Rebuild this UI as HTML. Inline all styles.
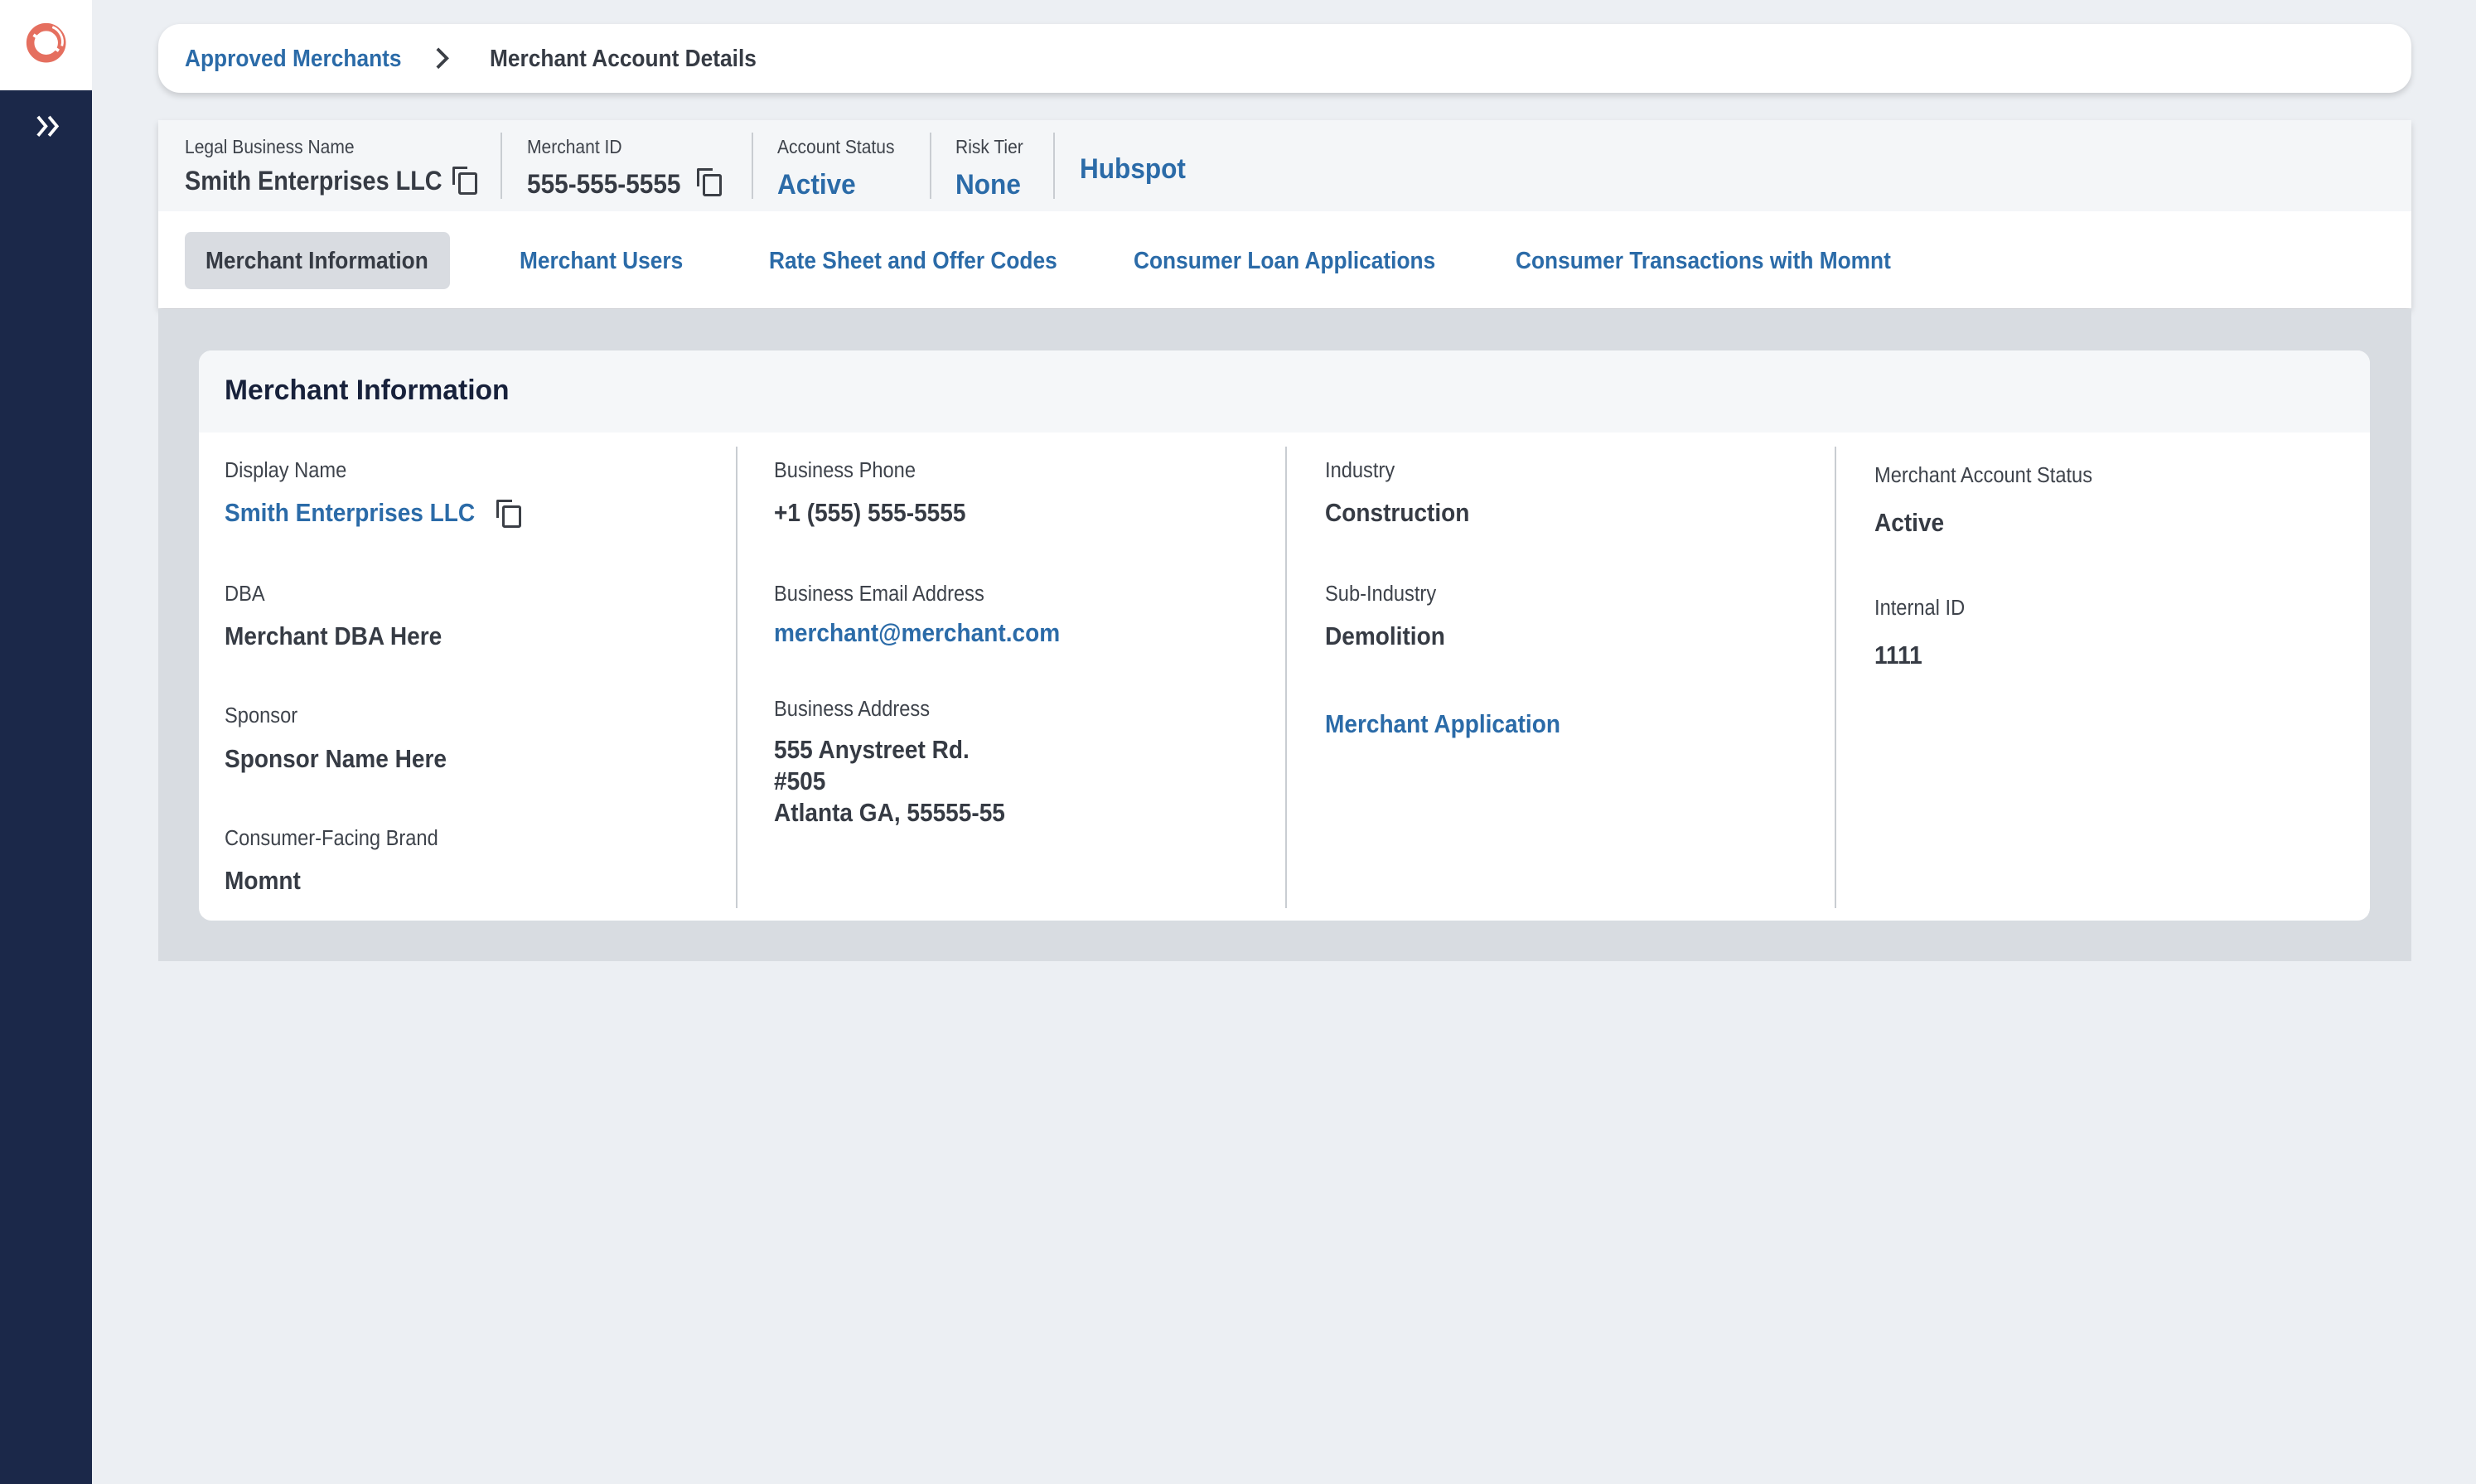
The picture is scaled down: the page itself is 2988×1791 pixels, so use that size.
<!DOCTYPE html>
<html><head><meta charset="utf-8"><style>
html,body{margin:0;padding:0;}
body{width:2988px;height:1790px;overflow:hidden;background:#eceff3;font-family:"Liberation Sans",sans-serif;}
#w{zoom:1.9056;width:1568px;height:940px;position:relative;}
.a{position:absolute;white-space:nowrap;transform:scaleX(.92);transform-origin:left center;line-height:1;}
.b{font-weight:bold;}
.blue{color:#2b6ba8;}
.dk{color:#363b44;}
.lb{font-size:13.5px;color:#3e434b;}
.lbs{font-size:12px;color:#3e434b;}
.v{font-size:16px;font-weight:bold;color:#363b44;}
.sep{position:absolute;width:1px;background:#c9cdd2;}
.copy{position:absolute;width:9px;height:11px;border:1.6px solid #3b3f46;border-radius:1.5px;}
.copy:before{content:"";position:absolute;left:-5px;top:-5px;width:8px;height:10px;border-left:1.6px solid #3b3f46;border-top:1.6px solid #3b3f46;border-radius:1px 0 0 0;}
</style></head><body><div id="w">
<div style="position:absolute;left:0;top:0;width:58px;height:940px;background:#1b2849;"></div>
<div style="position:absolute;left:0;top:0;width:58px;height:57px;background:#fff;"></div>
<svg style="position:absolute;left:15px;top:13px" width="28" height="28" viewBox="0 0 28 28"><circle cx="14" cy="14" r="10" fill="none" stroke="#e56f5f" stroke-width="5"/><path d="M6 9 L14 14 M22 19 L14 14" stroke="#fff" stroke-width="2"/><path d="M18 4 A10 10 0 0 1 24 16" stroke="#fff" stroke-width="1.5" fill="none"/></svg>
<svg style="position:absolute;left:22px;top:73px" width="16" height="14"><path d="M2 1 L7 7 L2 13 M9 1 L14 7 L9 13" stroke="#fff" stroke-width="2" fill="none"/></svg>
<div style="position:absolute;left:100px;top:15px;width:1427px;height:44px;background:#fff;border-radius:14px;box-shadow:0 2px 4px rgba(0,0,0,.15);"></div>
<div class="a b blue" style="left:117px;top:30px;font-size:15px;">Approved Merchants</div>
<svg style="position:absolute;left:275px;top:30px" width="10" height="14"><path d="M2 1 L8 7 L2 13" stroke="#3b3f46" stroke-width="2" fill="none"/></svg>
<div class="a b dk" style="left:310px;top:30px;font-size:15px;">Merchant Account Details</div>
<div style="position:absolute;left:100px;top:76px;width:1427px;height:119px;background:#fff;box-shadow:0 2px 4px rgba(0,0,0,.15);"></div>
<div style="position:absolute;left:100px;top:76px;width:1427px;height:58px;background:#f4f6f8;"></div>
<div class="a lbs" style="left:117px;top:87px;">Legal Business Name</div>
<div class="a v" style="left:117px;top:106px;font-size:17px;transform:scaleX(.89);">Smith Enterprises LLC</div>
<div class="copy" style="left:290px;top:109px;"></div>
<div class="sep" style="left:317px;top:84px;height:42px;"></div>
<div class="a lbs" style="left:334px;top:87px;">Merchant ID</div>
<div class="a v" style="left:334px;top:108px;font-size:17px;">555-555-5555</div>
<div class="copy" style="left:445px;top:110px;"></div>
<div class="sep" style="left:476px;top:84px;height:42px;"></div>
<div class="a lbs" style="left:492px;top:87px;">Account Status</div>
<div class="a v" style="left:492px;top:108px;font-size:18px;color:#2b6ba8;">Active</div>
<div class="sep" style="left:589px;top:84px;height:42px;"></div>
<div class="a lbs" style="left:605px;top:87px;">Risk Tier</div>
<div class="a v" style="left:605px;top:108px;font-size:18px;color:#2b6ba8;">None</div>
<div class="sep" style="left:667px;top:84px;height:42px;"></div>
<div class="a v" style="left:684px;top:98px;font-size:18px;color:#2b6ba8;">Hubspot</div>
<div style="position:absolute;left:117px;top:147px;width:168px;height:36px;background:#d9dce1;border-radius:4px;"></div>
<div class="a b dk" style="left:130px;top:158px;font-size:15px;">Merchant Information</div>
<div class="a b blue" style="left:329px;top:158px;font-size:15px;">Merchant Users</div>
<div class="a b blue" style="left:487px;top:158px;font-size:15px;">Rate Sheet and Offer Codes</div>
<div class="a b blue" style="left:718px;top:158px;font-size:15px;">Consumer Loan Applications</div>
<div class="a b blue" style="left:960px;top:158px;font-size:15px;">Consumer Transactions with Momnt</div>
<div style="position:absolute;left:100px;top:196px;width:1427px;height:413px;background:#d8dce1;"></div>
<div style="position:absolute;left:126px;top:222px;width:1375px;height:361px;background:#fff;border-radius:8px;overflow:hidden;">
<div style="height:52px;background:#f5f7f9;"></div></div>
<div class="a" style="left:142px;top:238px;font-size:18px;font-weight:bold;color:#17213b;transform:scaleX(.98);">Merchant Information</div>
<div class="sep" style="left:466px;top:283px;height:292px;"></div>
<div class="sep" style="left:814px;top:283px;height:292px;"></div>
<div class="sep" style="left:1162px;top:283px;height:292px;"></div>
<div class="a lb" style="left:142px;top:292px;">Display Name</div>
<div class="a v" style="left:142px;top:317px;color:#2b6ba8;">Smith Enterprises LLC</div>
<div class="copy" style="left:318px;top:320px;"></div>
<div class="a lb" style="left:142px;top:370px;">DBA</div>
<div class="a v" style="left:142px;top:395px;">Merchant DBA Here</div>
<div class="a lb" style="left:142px;top:447px;">Sponsor</div>
<div class="a v" style="left:142px;top:473px;">Sponsor Name Here</div>
<div class="a lb" style="left:142px;top:525px;">Consumer-Facing Brand</div>
<div class="a v" style="left:142px;top:550px;">Momnt</div>
<div class="a lb" style="left:490px;top:292px;">Business Phone</div>
<div class="a v" style="left:490px;top:317px;">+1 (555) 555-5555</div>
<div class="a lb" style="left:490px;top:370px;">Business Email Address</div>
<div class="a v" style="left:490px;top:393px;color:#2b6ba8;">merchant@merchant.com</div>
<div class="a lb" style="left:490px;top:443px;">Business Address</div>
<div class="a v" style="left:490px;top:467px;">555 Anystreet Rd.</div>
<div class="a v" style="left:490px;top:487px;">#505</div>
<div class="a v" style="left:490px;top:507px;">Atlanta GA, 55555-55</div>
<div class="a lb" style="left:839px;top:292px;">Industry</div>
<div class="a v" style="left:839px;top:317px;">Construction</div>
<div class="a lb" style="left:839px;top:370px;">Sub-Industry</div>
<div class="a v" style="left:839px;top:395px;">Demolition</div>
<div class="a v" style="left:839px;top:451px;color:#2b6ba8;">Merchant Application</div>
<div class="a lb" style="left:1187px;top:295px;">Merchant Account Status</div>
<div class="a v" style="left:1187px;top:323px;">Active</div>
<div class="a lb" style="left:1187px;top:379px;">Internal ID</div>
<div class="a v" style="left:1187px;top:407px;">1111</div>
</div></body></html>
